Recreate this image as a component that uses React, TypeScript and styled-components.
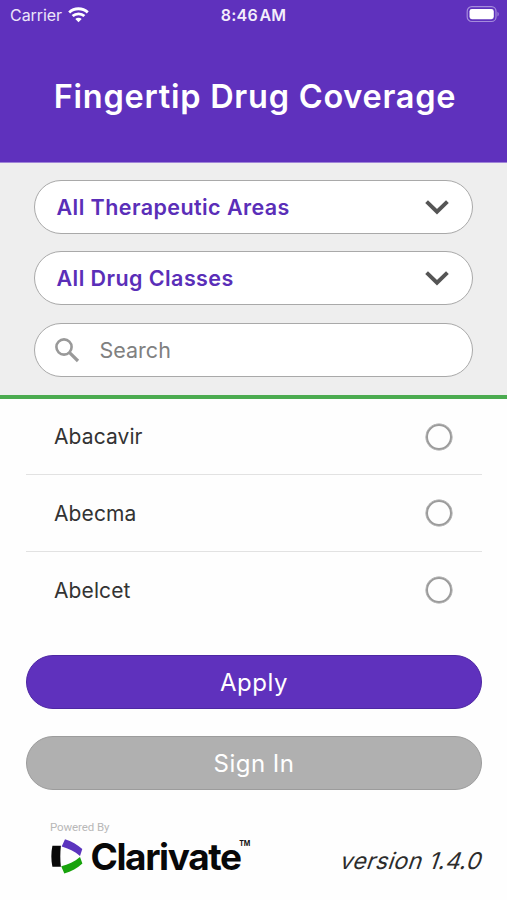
import React, { useState } from 'react';
import styled, { createGlobalStyle } from 'styled-components';

const GlobalStyle = createGlobalStyle`
  * { box-sizing: border-box; }
  body { margin: 0; background: #fefefe; font-family: Inter, "Liberation Sans", sans-serif; }
`;

const Screen = styled.div`
  display: flex;
  flex-direction: column;
  width: 507px;
  height: 900px;
  overflow: hidden;
  background: #fefefe;
`;

const Header = styled.header`
  height: 163px;
  background: #5f31bd;
  border-bottom: 1px solid #9f84d8;
  color: #fff;
`;

const StatusBar = styled.div`
  display: grid;
  grid-template-columns: 1fr auto 1fr;
  align-items: center;
  height: 30px;
  padding: 0 7px 0 10px;
`;

const Carrier = styled.div`
  display: flex;
  align-items: center;
  gap: 6px;
  color: #ece5f9;
  font-size: 16px;
  line-height: 30px;
  letter-spacing: -0.05px;
`;

const Clock = styled.div`
  padding-right: 3px;
  color: #f3eefb;
  font-size: 16px;
  font-weight: 600;
  letter-spacing: 0.25px;
  word-spacing: -2.8px;
`;

const Battery = styled.svg`
  justify-self: end;
`;

const Title = styled.h1`
  margin: 46px 0 0 3px;
  font-size: 32.5px;
  line-height: 42px;
  font-weight: 600;
  letter-spacing: 0.75px;
  text-align: center;
  white-space: nowrap;
`;

const Filters = styled.section`
  display: flex;
  flex-direction: column;
  gap: 17.3px;
  height: 236px;
  padding: 17px 34px 0 34px;
  background: #eee;
  border-bottom: 4px solid #4bab50;
`;

const Select = styled.button`
  display: flex;
  align-items: center;
  justify-content: space-between;
  height: 54px;
  flex: none;
  padding: 0 23.5px 0 21.5px;
  border: 1.5px solid #a9a9a9;
  border-radius: 28px;
  background: #fff;
  color: #5a2eb8;
  font: 600 21.5px Inter, sans-serif;
  letter-spacing: 0.43px;
`;

const SearchField = styled.label`
  display: flex;
  align-items: center;
  gap: 20px;
  height: 54px;
  flex: none;
  padding: 0 18.5px;
  border: 1.5px solid #a9a9a9;
  border-radius: 28px;
  background: #fff;
`;

const SearchInput = styled.input`
  flex: 1;
  min-width: 0;
  padding: 0;
  border: 0;
  outline: 0;
  background: none;
  font: 400 21.5px Inter, sans-serif;
  letter-spacing: 0;
  &::placeholder { color: #808080; opacity: 1; }
`;

const DrugList = styled.ul`
  height: 231px;
  margin: 0 25px 0 26px;
  padding: 0;
  list-style: none;
`;

const DrugRow = styled.li`
  display: flex;
  align-items: center;
  justify-content: space-between;
  height: 77px;
  padding: 0 30px 0 28px;
  color: #333;
  font-size: 21px;
  letter-spacing: 0.1px;
  & + & { border-top: 1.5px solid #e2e2e2; }
  &:first-child { height: 75px; }
`;

const Radio = styled.button<{ $on: boolean }>`
  width: 26px;
  height: 26px;
  padding: 0;
  border: 2px solid #9b9b9b;
  border-radius: 50%;
  background: ${p => (p.$on ? '#5f31bd' : 'transparent')};
  box-shadow: 0 0 0 0.5px #9b9b9b;
`;

const Actions = styled.div`
  display: flex;
  flex-direction: column;
  gap: 27px;
  padding: 25px 25px 0 26px;
`;

const ActionButton = styled.button<{ $primary?: boolean }>`
  height: 54px;
  padding: 0;
  border: 1.2px solid ${p => (p.$primary ? '#4e27a3' : '#9c9c9c')};
  border-radius: 27px;
  background: ${p => (p.$primary ? '#5f31bd' : '#b0b0b0')};
  color: #fff;
  font: 400 24px Inter, sans-serif;
  letter-spacing: 0.5px;
`;

const Footer = styled.footer`
  display: flex;
  justify-content: space-between;
  padding: 30px 25px 0 50px;
`;

const Brand = styled.div`
  display: flex;
  flex-direction: column;
`;

const Powered = styled.div`
  color: #b8b8b8;
  font: 400 11.5px/14px Roboto, sans-serif;
  letter-spacing: -0.1px;
`;

const Logo = styled.div`
  display: flex;
  align-items: flex-start;
  margin-top: 2px;
`;

const Wordmark = styled.span`
  margin-left: 6.5px;
  color: #080808;
  font-size: 37px;
  line-height: 42px;
  font-weight: 700;
  letter-spacing: -1.4px;
`;

const Trademark = styled.span`
  margin-top: 4px;
  margin-left: -1.500px;
  color: #111;
  font-size: 7px;
  line-height: 8px;
  font-weight: 700;
`;

const Version = styled.div`
  margin-top: 26px;
  color: #2c2c2c;
  font-size: 23px;
  line-height: 30px;
  letter-spacing: 0.35px;
  transform: skewX(-19deg);
  white-space: nowrap;
`;

const Chevron = () => (
  <svg width="24" height="16" viewBox="0 0 24 16" fill="none" stroke="#555" strokeWidth="3.9">
    <path d="M1.6 2.6 12 12.7 22.4 2.6" />
  </svg>
);

const drugs = ['Abacavir', 'Abecma', 'Abelcet'];

export default function App() {
  const [selected, setSelected] = useState<string | null>(null);
  return (
    <Screen>
      <GlobalStyle />
      <Header>
        <StatusBar>
          <Carrier>
            Carrier
            <svg width="21" height="16" viewBox="0 0 21 16" fill="none" stroke="#fff" strokeWidth="2.8">
              <path d="M1.2 5.4C6.3.5 14.5.5 19.8 5.4" />
              <path d="M4.6 9.1c3.3-3.1 8.6-3.1 11.8 0" />
              <path d="m7.3 12.1 3.2 3.2 3.2-3.2c-1.8-1.7-4.6-1.7-6.4 0Z" fill="#fff" stroke="none" />
            </svg>
          </Carrier>
          <Clock>8:46 AM</Clock>
          <Battery width="34" height="18" viewBox="0 0 34 18">
            <rect x="1.2" y="0.7" width="28.8" height="14.8" rx="4.6" fill="none" stroke="#a58bdc" strokeWidth="1.2" />
            <rect x="3.5" y="3" width="24.3" height="10.2" rx="2.4" fill="#fff" />
            <path d="M31.5 5.8c1.7.8 1.7 3.8 0 4.6Z" fill="#a58bdc" />
          </Battery>
        </StatusBar>
        <Title>Fingertip Drug Coverage</Title>
      </Header>
      <Filters>
        <Select>All Therapeutic Areas<Chevron /></Select>
        <Select>All Drug Classes<Chevron /></Select>
        <SearchField>
          <svg width="26" height="26" viewBox="0 0 26 26" fill="none" stroke="#999" strokeWidth="2.6">
            <circle cx="10" cy="10" r="7.6" />
            <path d="m15.3 15.3 8.7 8.7" strokeWidth="3.2" />
          </svg>
          <SearchInput placeholder="Search" />
        </SearchField>
      </Filters>
      <DrugList>
        {drugs.map(name => (
          <DrugRow key={name}>
            {name}
            <Radio aria-label={name} $on={selected === name} onClick={() => setSelected(name)} />
          </DrugRow>
        ))}
      </DrugList>
      <Actions>
        <ActionButton $primary>Apply</ActionButton>
        <ActionButton>Sign In</ActionButton>
      </Actions>
      <Footer>
        <Brand>
          <Powered>Powered By</Powered>
          <Logo>
            <svg width="34" height="42" viewBox="0 0 34 42">
              <path d="M2.4 9.8h8.5c-.8 7-.8 14 0 21H2.4c-1.4-7-1.4-14 0-21Z" fill="#080808" />
              <path d="M15 3.2c6.700 2 12.400 5.300 17.300 9.800L30 20c-5.300-4.600-11.400-7.600-18.300-9.500Z" fill="#5b34be" />
              <path d="M30 20.900 32.400 27.400c-5 4.400-10.900 8-18.100 10.100L11.200 30.300c7-1.700 13.300-4.900 18.800-9.400Z" fill="#18a30c" />
            </svg>
            <Wordmark>Clarivate</Wordmark>
            <Trademark>TM</Trademark>
          </Logo>
        </Brand>
        <Version>version 1.4.0</Version>
      </Footer>
    </Screen>
  );
}
